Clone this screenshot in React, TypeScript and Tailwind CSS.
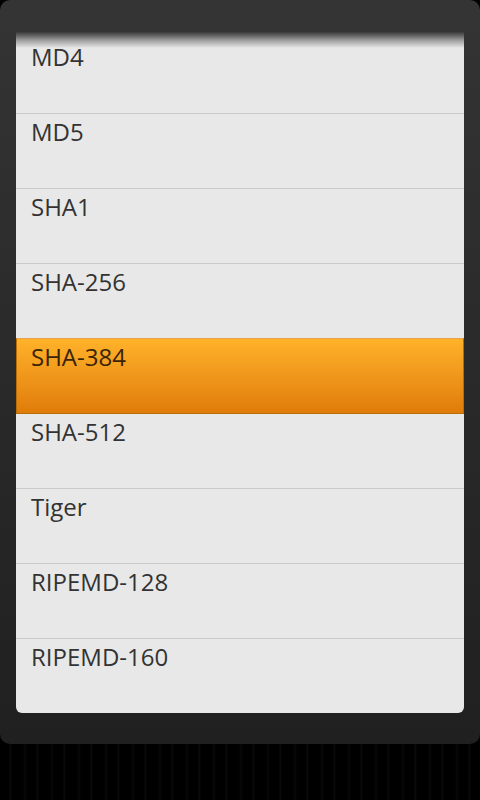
import React from 'react';

const items = ['MD4', 'MD5', 'SHA1', 'SHA-256', 'SHA-384', 'SHA-512', 'Tiger', 'RIPEMD-128', 'RIPEMD-160'];
const selected = 'SHA-384';

export default function App() {
  return (
    <div
      className="w-[480px] h-[800px] bg-[repeating-linear-gradient(90deg,#000_0px,#000_9px,#0c0c0c_10px,#000_12px,#000_23px,#080808_25px,#000_27px)] overflow-hidden"
      style={{ fontFamily: '"Open Sans", Roboto, sans-serif' }}
    >
      {/* Dialog frame */}
      <div className="h-[744px] rounded-[10px] bg-gradient-to-b from-[#343434] to-[#202020] pt-[32px] px-[16px] pb-[31px]">
        <div className="relative h-full bg-[#e8e8e8] rounded-b-[6px] overflow-hidden">
          <div className="pt-[7px]">
            {items.map((name) =>
              name === selected ? (
                <div
                  key={name}
                  className="h-[76px] -mt-px border border-[#b96d06] border-t-[#e9a24a] bg-gradient-to-b from-[#ffb229] to-[#e07c09] pl-[14px] pt-[4px] text-[24px] leading-[28px] text-[#3a2408]"
                >
                  {name}
                </div>
              ) : (
                <div
                  key={name}
                  className="h-[75px] border-b border-[#c9c9c9] pl-[15px] pt-[4px] text-[24px] leading-[28px] text-[#333333]"
                >
                  {name}
                </div>
              )
            )}
          </div>
          {/* top fading shadow */}
          <div className="absolute inset-x-0 top-0 h-[16px] bg-gradient-to-b from-[#3a3a3a] via-[#9a9a9a] to-transparent pointer-events-none" />
        </div>
      </div>
    </div>
  );
}
